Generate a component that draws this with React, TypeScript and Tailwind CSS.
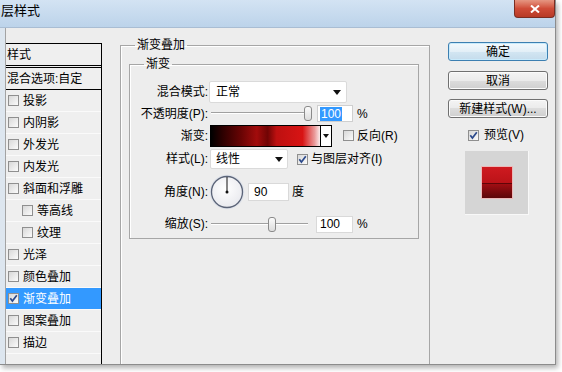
import React from "react";

type Item = { t: string; sub?: boolean; on?: boolean };

const items: Item[] = [
  { t: "投影" },
  { t: "内阴影" },
  { t: "外发光" },
  { t: "内发光" },
  { t: "斜面和浮雕" },
  { t: "等高线", sub: true },
  { t: "纹理", sub: true },
  { t: "光泽" },
  { t: "颜色叠加" },
  { t: "渐变叠加", on: true },
  { t: "图案叠加" },
  { t: "描边" },
];

const Box = ({ checked = false }: { checked?: boolean }) => (
  <span className="flex h-[11px] w-[11px] shrink-0 items-center justify-center border border-[#8f8f8f] bg-linear-to-br from-[#d8d8d8] to-[#fbfbfb]">
    {checked && (
      <svg width="9" height="9" viewBox="0 0 9 9">
        <path d="M1.3 4.3 L3.4 7 L7.8 1.2" fill="none" stroke="#2c4a8c" strokeWidth="1.7" />
      </svg>
    )}
  </span>
);

const Arrow = () => (
  <svg width="8" height="5" viewBox="0 0 8 5">
    <path d="M0 0 H8 L4 5 Z" fill="#111" />
  </svg>
);

const Slider = ({ thumb }: { thumb: string }) => (
  <div className="relative ml-[2px] h-[17px] w-[102px]">
    <div className="absolute left-[1px] right-[4px] top-[7px] h-[2px] border-t border-[#a0a0a0] border-b border-b-white bg-[#e4e4e4]" />
    <div className={"absolute top-[1px] h-[15px] w-[8px] rounded-[3px] border border-[#8a8a8a] bg-linear-to-b from-[#fbfbfb] to-[#dcdcdc] " + thumb} />
  </div>
);

const Btn = ({ children, primary = false }: { children: React.ReactNode; primary?: boolean }) => (
  <button
    className={
      primary
        ? "flex h-[19px] w-[100px] items-center justify-center rounded-[3px] border border-[#3c7fb1] bg-[linear-gradient(#f3f9fd,#e3eff7_50%,#d3e6f2_50%,#c5dcec)] text-[12px] leading-[14px] text-black shadow-[inset_0_0_0_1px_#c8eafb]"
        : "flex h-[19px] w-[100px] items-center justify-center rounded-[3px] border border-[#707070] bg-[linear-gradient(#f4f4f4,#ebebeb_50%,#dddddd_50%,#cfcfcf)] text-[12px] leading-[14px] text-black shadow-[inset_0_0_0_1px_#fbfbfb]"
    }
  >
    {children}
  </button>
);

export default function App() {
  return (
    <div className="h-[372px] w-[562px] overflow-hidden bg-white font-['Liberation_Sans','Noto_Sans_CJK_SC',sans-serif] text-[12px] leading-[14px] text-black">
      <div className="flex h-[365px] w-[556px] flex-col border-r border-b border-[#8c8c8c] shadow-[2px_3px_5px_rgba(0,0,0,0.3)]">
        {/* title bar */}
        <div className="flex h-[28px] shrink-0 items-start justify-between border-b border-[#a9bdd3] bg-linear-to-b from-[#d3e3f3] to-[#bcd3ea]">
          <span className="ml-[1px] mt-[3px] text-[13px] leading-[16px] text-black">层样式</span>
          <div className="flex h-[18px] w-[41px] items-center justify-center rounded-b-[4px] border border-t-0 border-[#7a2d22] bg-linear-to-b from-[#e59682] via-[#cf4c38] to-[#b73a26]">
            <svg width="10" height="8" viewBox="0 0 10 8">
              <path d="M1 0.5 L9 7.5 M9 0.5 L1 7.5" stroke="#fff" strokeWidth="2" />
            </svg>
          </div>
        </div>

        {/* body */}
        <div className="flex flex-1 bg-[#ededed]">
          <div className="w-[6px] shrink-0 border-r border-[#a3a3a3] bg-[#dde6ef]" />

          {/* style list */}
          <div className="mt-[15px] flex w-[96px] shrink-0 flex-col border-t border-r border-black bg-[#efefef]">
            <div className="flex h-[22px] items-center border-b border-black pl-[1px]">样式</div>
            <div className="h-[1px]" />
            <div className="flex h-[23px] items-center border-t border-b border-black pl-[1px]">混合选项:自定</div>
            {items.map((it) => (
              <div
                key={it.t}
                className={
                  (it.on ? "bg-[#3399ff] text-white " : "") +
                  (it.sub ? "pl-[16px] " : "pl-[2px] ") +
                  "flex h-[22px] items-center gap-[4px] border-b border-[#fafafa]"
                }
              >
                <Box checked={it.on} />
                <span>{it.t}</span>
              </div>
            ))}
            <div className="flex-1" />
          </div>

          <div className="w-[18px] shrink-0" />

          {/* main group */}
          <fieldset className="mt-[10px] w-[310px] shrink-0 border border-b-0 border-[#a6a6a6] shadow-[inset_1px_1px_0_#fff]">
            <legend className="ml-[14px] px-[2px] text-[12px] leading-[14px]">渐变叠加</legend>
            <fieldset className="ml-[8px] mt-[5px] w-[290px] border border-[#a6a6a6] pb-[3px] pt-[10px] shadow-[inset_1px_1px_0_#fff]">
              <legend className="ml-[14px] px-[2px] text-[12px] leading-[14px]">渐变</legend>

              <div className="flex h-[22px] items-center">
                <span className="w-[78px] text-right">混合模式:</span>
                <div className="ml-[1px] flex h-[22px] w-[138px] items-center justify-between rounded-[2px] border border-[#dadada] bg-white pl-[6px] pr-[5px]">
                  <span>正常</span>
                  <Arrow />
                </div>
              </div>

              <div className="flex h-[21px] items-center">
                <span className="w-[78px] text-right">不透明度(P):</span>
                <Slider thumb="left-[94px]" />
                <div className="ml-[5px] flex h-[17px] w-[36px] items-center border border-[#cfcfcf] bg-white pl-[2px]">
                  <span className="bg-[#3399ff] px-[1px] text-white">100</span>
                </div>
                <span className="ml-[4px]">%</span>
              </div>

              <div className="flex h-[23px] items-center">
                <span className="w-[78px] text-right">渐变:</span>
                <div className="ml-[2px] flex h-[22px] w-[122px] border border-black">
                  <div className="flex-1 bg-[linear-gradient(to_right,#000_0%,#2a0000_10%,#6a0404_28%,#a20c0c_42%,#700404_52%,#bd1010_60%,#d81414_84%,#ea9a9a_95%,#fbecec_100%)]" />
                  <div className="flex w-[11px] items-center justify-center border-l border-black bg-white">
                    <svg width="6" height="4" viewBox="0 0 6 4">
                      <path d="M0 0 H6 L3 4 Z" fill="#111" />
                    </svg>
                  </div>
                </div>
                <span className="ml-[11px]"><Box /></span>
                <span className="ml-[3px]">反向(R)</span>
              </div>

              <div className="flex h-[24px] items-center">
                <span className="w-[78px] text-right">样式(L):</span>
                <div className="ml-[2px] flex h-[20px] w-[78px] items-center justify-between rounded-[2px] border border-[#dadada] bg-white pl-[5px] pr-[4px]">
                  <span>线性</span>
                  <Arrow />
                </div>
                <span className="ml-[9px]"><Box checked /></span>
                <span className="ml-[3px]">与图层对齐(I)</span>
              </div>

              <div className="flex h-[42px] items-center">
                <span className="w-[78px] text-right">角度(N):</span>
                <svg className="ml-[1px]" width="36" height="36" viewBox="0 0 36 36">
                  <defs>
                    <radialGradient id="dial" cx="45%" cy="40%" r="60%">
                      <stop offset="0%" stopColor="#ffffff" />
                      <stop offset="100%" stopColor="#e8e9ee" />
                    </radialGradient>
                  </defs>
                  <circle cx="18" cy="18" r="16.5" fill="url(#dial)" stroke="#dfe3ea" strokeWidth="1.5" />
                  <circle cx="18" cy="18" r="15.5" fill="none" stroke="#5b6478" strokeWidth="1.3" />
                  <line x1="18" y1="18" x2="18" y2="3" stroke="#111" strokeWidth="1" />
                  <circle cx="18" cy="18" r="1.5" fill="#111" />
                </svg>
                <div className="ml-[3px] flex h-[18px] w-[41px] items-center border border-[#d9d9d9] bg-white pl-[5px]">90</div>
                <span className="ml-[3px]">度</span>
              </div>

              <div className="flex h-[22px] items-center">
                <span className="w-[78px] text-right">缩放(S):</span>
                <Slider thumb="left-[58px]" />
                <div className="ml-[4px] flex h-[17px] w-[37px] items-center border border-[#d9d9d9] bg-white pl-[3px]">100</div>
                <span className="ml-[4px]">%</span>
              </div>
            </fieldset>
          </fieldset>

          {/* buttons */}
          <div className="flex flex-1 flex-col pl-[18px] pt-[14px]">
            <Btn primary>确定</Btn>
            <div className="mt-[10px]">
              <Btn>取消</Btn>
            </div>
            <div className="mt-[9px]">
              <Btn>新建样式(W)...</Btn>
            </div>
            <div className="mt-[10px] flex items-center pl-[20px]">
              <Box checked />
              <span className="ml-[5px]">预览(V)</span>
            </div>
            <div className="ml-[17px] mt-[9px] flex h-[64px] w-[64px] items-center justify-center border-b border-r border-[#f8f8f8] bg-[#d5d5d5]">
              <div className="flex h-[33px] w-[32px] flex-col border border-[#ecb8b8]">
                <div className="h-[16px] bg-linear-to-b from-[#cf1a20] to-[#bb1318]" />
                <div className="h-[1px] bg-[#600508]" />
                <div className="flex-1 bg-linear-to-b from-[#a10e13] to-[#5c0709]" />
              </div>
            </div>
          </div>
        </div>
      </div>
    </div>
  );
}
